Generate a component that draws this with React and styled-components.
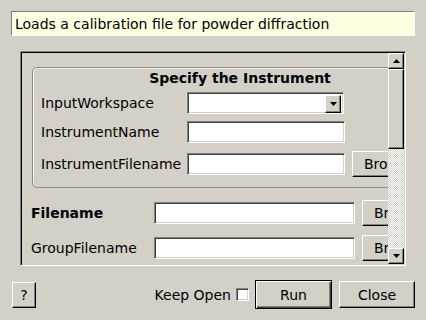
import React from "react";
import styled, { createGlobalStyle, css } from "styled-components";

const GlobalStyle = createGlobalStyle`
  html, body {
    margin: 0;
    padding: 0;
    background: #d4d0c8;
    overflow: hidden;
  }
  body {
    font-family: "DejaVu Sans", "Liberation Sans", sans-serif;
    font-size: 14px;
    color: #000;
  }
  * {
    box-sizing: border-box;
  }
`;

const raised = css`
  background: #d4d0c8;
  border: 1px solid;
  border-color: #fff #000 #000 #fff;
  box-shadow: inset -1px -1px #808080;
`;

const sunken = css`
  background: #fff;
  border: 1px solid;
  border-color: #808080 #fff #fff #808080;
  box-shadow: inset 1px 1px #404040, inset -1px -1px #d4d0c8;
`;

const Window = styled.div`
  width: 426px;
  height: 320px;
  padding: 11px 11px 0 11px;
  display: flex;
  flex-direction: column;
`;

const Description = styled.div`
  height: 25px;
  background: #ffffe1;
  border: 1px solid;
  border-color: #808080 #fff #fff #808080;
  padding: 0 3px;
  display: flex;
  align-items: center;
  white-space: nowrap;
`;

const ScrollFrame = styled.div`
  margin: 15px 9px 0 9px;
  height: 215px;
  display: flex;
  border: 1px solid;
  border-color: #808080 #fff #fff #808080;
  box-shadow: inset 1px 1px #000, inset -1px -1px #d4d0c8;
  padding: 1px;
`;

const Viewport = styled.div`
  flex: 1;
  overflow: hidden;
  padding: 14px 0 0 9px;
`;

const Content = styled.div`
  width: 430px;
  display: flex;
  flex-direction: column;
`;

const GroupBox = styled.fieldset`
  margin: 0 0 0 1px;
  width: 405px;
  border: 1px solid #8f8c87;
  border-radius: 5px;
  box-shadow: inset 1px 1px #f4f2ee;
  padding: 2px 0 10px 8px;
  display: flex;
  flex-direction: column;
  gap: 7px;
`;

const GroupTitle = styled.div`
  font-weight: bold;
  text-align: center;
  line-height: 17px;
  height: 17px;
  margin-right: 8px;
  padding-left: 11px;
  margin-bottom: -2px;
`;

const Row = styled.div`
  display: flex;
  align-items: center;
  height: ${(p) => (p.$tall ? 26 : 22)}px;
  margin-top: ${(p) => p.$offset || 0}px;
  flex-shrink: 0;
`;

const Label = styled.div`
  width: ${(p) => p.$width}px;
  flex-shrink: 0;
  font-weight: ${(p) => (p.$bold ? "bold" : "normal")};
  white-space: nowrap;
`;

const TextField = styled.div`
  ${sunken};
  width: ${(p) => p.$width}px;
  height: 22px;
  flex-shrink: 0;
`;

const Combo = styled.div`
  ${sunken};
  width: ${(p) => p.$width}px;
  height: 22px;
  flex-shrink: 0;
  display: flex;
  justify-content: flex-end;
  padding: 2px;
`;

const ComboButton = styled.div`
  ${raised};
  width: 16px;
  height: 18px;
  display: flex;
  align-items: center;
  justify-content: center;
`;

const Button = styled.div`
  ${raised};
  width: ${(p) => p.$width}px;
  height: ${(p) => p.$height || 26}px;
  margin-left: ${(p) => p.$gap || 0}px;
  flex-shrink: 0;
  display: flex;
  align-items: center;
  justify-content: center;
  white-space: nowrap;
  ${(p) =>
    p.$default &&
    css`
      border: 1px solid #000;
      box-shadow: inset 1px 1px #fff, inset -1px -1px #404040,
        inset -2px -2px #808080;
    `}
`;

const LowerRows = styled.div`
  margin-top: 12px;
  display: flex;
  flex-direction: column;
  gap: 9px;
`;

const ScrollBar = styled.div`
  width: 16px;
  flex-shrink: 0;
  display: flex;
  flex-direction: column;
`;

const ArrowButton = styled.div`
  ${raised};
  height: 16px;
  display: flex;
  align-items: center;
  justify-content: center;
`;

const Thumb = styled.div`
  ${raised};
  height: 80px;
`;

const Trough = styled.div`
  flex: 1;
  background-color: #d4d0c8;
  background-image: repeating-conic-gradient(#fff 0 25%, #d4d0c8 0 50%);
  background-size: 2px 2px;
`;

const BottomBar = styled.div`
  margin-top: 14px;
  height: 29px;
  display: flex;
  align-items: center;
`;

const Spacer = styled.div`
  flex: 1;
`;

const CheckLabel = styled.label`
  display: flex;
  align-items: center;
  white-space: nowrap;
`;

const CheckBox = styled.span`
  ${sunken};
  width: 13px;
  height: 13px;
  margin-left: 5px;
`;

const Arrow = ({ up }) => (
  <svg width="7" height="4" viewBox="0 0 7 4">
    <polygon points={up ? "3.5,0 7,4 0,4" : "0,0 7,0 3.5,4"} fill="#000" />
  </svg>
);

const App = () => (
  <>
    <GlobalStyle />
    <Window>
      <Description>Loads a calibration file for powder diffraction</Description>
      <ScrollFrame>
        <Viewport>
          <Content>
            <GroupBox>
              <GroupTitle>Specify the Instrument</GroupTitle>
              <Row>
                <Label $width={146}>InputWorkspace</Label>
                <Combo $width={157}>
                  <ComboButton>
                    <Arrow />
                  </ComboButton>
                </Combo>
              </Row>
              <Row>
                <Label $width={146}>InstrumentName</Label>
                <TextField $width={158} />
              </Row>
              <Row $tall $offset={1}>
                <Label $width={146}>InstrumentFilename</Label>
                <TextField $width={158} />
                <Button $width={75} $gap={7}>
                  Browse
                </Button>
              </Row>
            </GroupBox>
            <LowerRows>
              <Row $tall>
                <Label $width={123} $bold>
                  Filename
                </Label>
                <TextField $width={201} />
                <Button $width={75} $gap={7}>
                  Browse
                </Button>
              </Row>
              <Row $tall>
                <Label $width={123}>GroupFilename</Label>
                <TextField $width={201} />
                <Button $width={75} $gap={7}>
                  Browse
                </Button>
              </Row>
            </LowerRows>
          </Content>
        </Viewport>
        <ScrollBar>
          <ArrowButton>
            <Arrow up />
          </ArrowButton>
          <Thumb />
          <Trough />
          <ArrowButton>
            <Arrow />
          </ArrowButton>
        </ScrollBar>
      </ScrollFrame>
      <BottomBar>
        <Button $width={24} $gap={1}>
          ?
        </Button>
        <Spacer />
        <CheckLabel>
          Keep Open
          <CheckBox />
        </CheckLabel>
        <Button $width={77} $height={29} $gap={6} $default>
          Run
        </Button>
        <Button $width={76} $height={27} $gap={7}>
          Close
        </Button>
      </BottomBar>
    </Window>
  </>
);

export default App;
